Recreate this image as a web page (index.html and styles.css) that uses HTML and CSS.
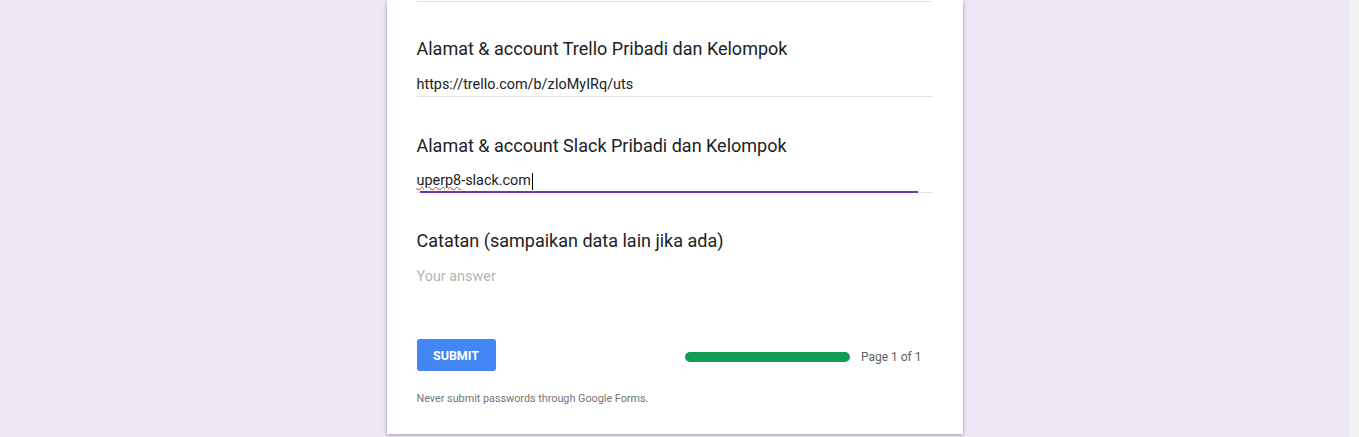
FILE: index.html
```html
<!DOCTYPE html>
<html>
<head>
<meta charset="utf-8">
<link rel="stylesheet" href="styles.css">
</head>
<body>
<div class="page">
  <div class="main">
    <div class="card">
      <div class="prev-line"></div>
      <div class="question q1">
        <div class="q-title">Alamat &amp; account Trello Pribadi dan Kelompok</div>
        <div class="q-input"><span class="val">https://trello.com/b/zIoMyIRq/uts</span></div>
      </div>
      <div class="question q2">
        <div class="q-title">Alamat &amp; account Slack Pribadi dan Kelompok</div>
        <div class="q-input focused"><span class="val"><span class="spell">uperp8</span>-slack.com</span><span class="caret"></span><span class="focus-line"></span></div>
      </div>
      <div class="question q3">
        <div class="q-title">Catatan (sampaikan data lain jika ada)</div>
        <div class="q-input empty"><span class="placeholder">Your answer</span></div>
      </div>
      <div class="actions">
        <button class="submit">SUBMIT</button>
        <div class="progress">
          <div class="bar"></div>
          <span class="page-label">Page 1 of 1</span>
        </div>
      </div>
      <div class="disclaimer">Never submit passwords through Google Forms.</div>
    </div>
  </div>
  <div class="scrollbar"></div>
</div>
</body>
</html>
```
FILE: styles.css
```css
* { box-sizing: border-box; }
html, body { margin: 0; padding: 0; height: 100%; overflow: hidden; }
body {
  font-family: Roboto, "Liberation Sans", Arial, sans-serif;
  background: #ede7f6;
  color: #202124;
}
.page { display: flex; height: 437px; }
.main { flex: 1; display: flex; justify-content: center; }
.scrollbar { width: 10px; background: #f1f1f1; }
.card {
  width: 576px;
  height: 434px;
  background: #fff;
  box-shadow: 0 1px 4px rgba(0,0,0,0.35);
  padding: 1px 31px 0 30px;
}
.prev-line { height: 1px; background: #e0e0e0; }
.q1 { padding-top: 35px; }
.q2 { padding-top: 37px; }
.q3 { padding-top: 36px; }
.q-title {
  font-size: 18px;
  line-height: 24px;
  height: 24px;
}
.q-input {
  position: relative;
  margin-top: 13px;
  height: 23px;
  border-bottom: 1px solid #e0e0e0;
  font-size: 14.4px;
  line-height: 20px;
  display: flex;
  align-items: center;
}
.focused { margin-top: 12px; }
.spell {
  text-decoration: underline wavy #d32f2f;
  text-decoration-thickness: 1px;
  text-underline-offset: 1px;
}
.caret {
  display: inline-block;
  width: 1px;
  height: 17px;
  background: #000;
  margin-left: 1px;
}
.focus-line {
  position: absolute;
  left: 3px;
  right: 14px;
  bottom: -1px;
  height: 2px;
  background: #673ab7;
}
.placeholder { color: #b5b5b5; }
.empty { border-bottom-color: transparent; }
.actions {
  margin-top: 50px;
  display: flex;
  align-items: center;
  justify-content: space-between;
  padding-right: 10px;
}
.submit {
  width: 79px;
  height: 32px;
  border: none;
  border-radius: 3px;
  background: #4285f4;
  color: #fff;
  font-family: Roboto, "Liberation Sans", Arial, sans-serif;
  font-weight: 700;
  font-size: 12.5px;
  padding: 0;
}
.progress { display: flex; align-items: center; gap: 11px; margin-top: 4px; }
.bar {
  width: 165px;
  height: 10px;
  border-radius: 5px;
  background: #0f9d58;
}
.page-label { font-size: 12px; color: #616161; }
.disclaimer {
  margin-top: 21px;
  font-size: 10.8px;
  color: #757575;
}
```
